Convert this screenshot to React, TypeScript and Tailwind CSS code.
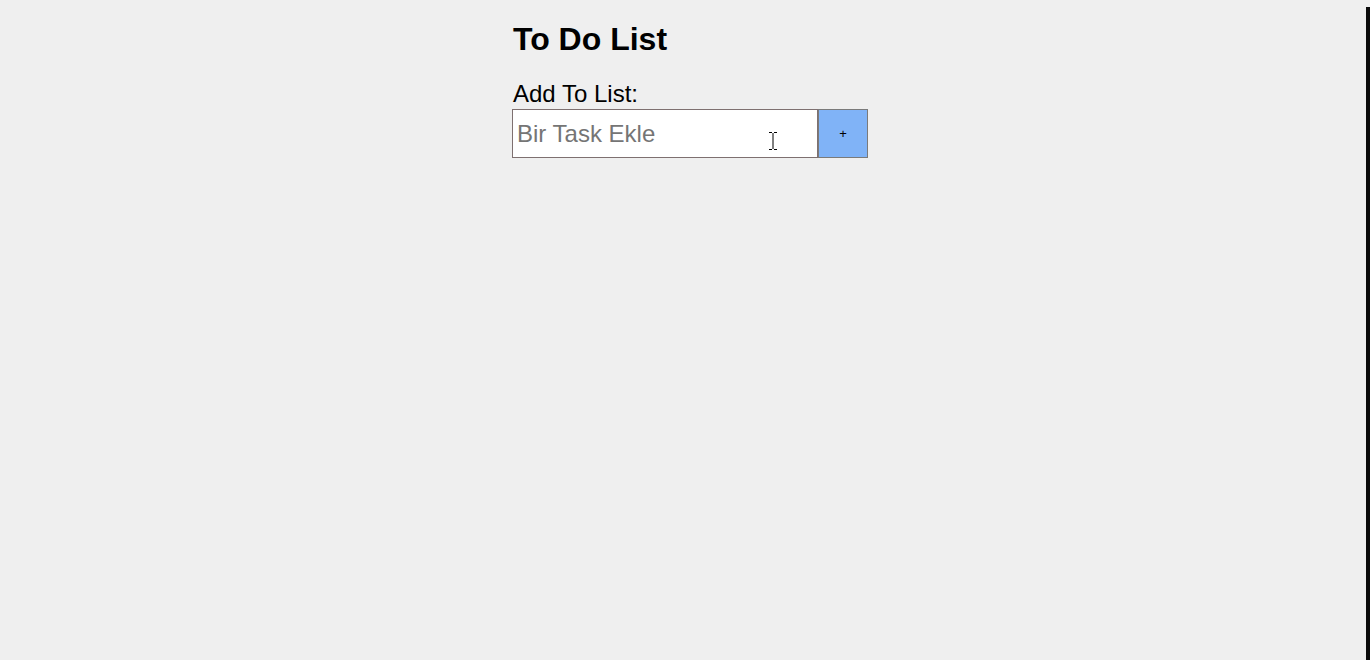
import { useState } from "react";

const App = () => {
  const [task, setTask] = useState<string>(""); // current input
  const [tasks, setTasks] = useState<string[]>([]);

  const handleAdd = () => {
    if (!task.trim()) return;
    setTasks([...tasks, task.trim()]);
    setTask("");
  };

  return (
    <div className="min-h-screen bg-[#efefef] flex font-['Liberation_Sans',Arial,sans-serif]">
      <div className="flex-1">
        <div className="ml-[512px] pt-[21px]">
          <h1 className="ml-[1px] text-[32px] leading-[37px] font-bold text-black">To Do List</h1>
          <label htmlFor="task" className="block mt-[22px] ml-[1px] text-[24px] leading-[28px] text-black">
            Add To List:
          </label>
          <div className="flex mt-[1px] relative">
            <input
              id="task"
              type="text"
              value={task}
              onChange={(e) => setTask(e.target.value)}
              placeholder="Bir Task Ekle"
              className="w-[306px] h-[49px] px-[4px] text-[24px] bg-white border border-[#7e7070] outline-none placeholder:text-[#757575] text-black"
            />
            <button
              onClick={handleAdd}
              className="w-[50px] h-[49px] bg-[#80b3f7] border border-[#7a7a7a] text-[13px] text-black flex items-center justify-center"
            >
              +
            </button>
            {/* mouse cursor over the input */}
            <svg
              className="absolute left-[256px] top-[22px] pointer-events-none"
              width="10"
              height="20"
              viewBox="0 0 10 20"
            >
              <path d="M1 1.5h3M6 1.5h3M5 2v16M1 18.5h3M6 18.5h3" stroke="#000" strokeWidth="1" fill="none" />
            </svg>
          </div>
          <ul className="mt-4">
            {tasks.map((t, i) => (
              <li key={i} className="text-[20px] text-black">
                {t}
              </li>
            ))}
          </ul>
        </div>
      </div>
      <div className="w-[4px] mt-[7px] bg-[#0b0b0b]" />
    </div>
  );
};

export default App;
